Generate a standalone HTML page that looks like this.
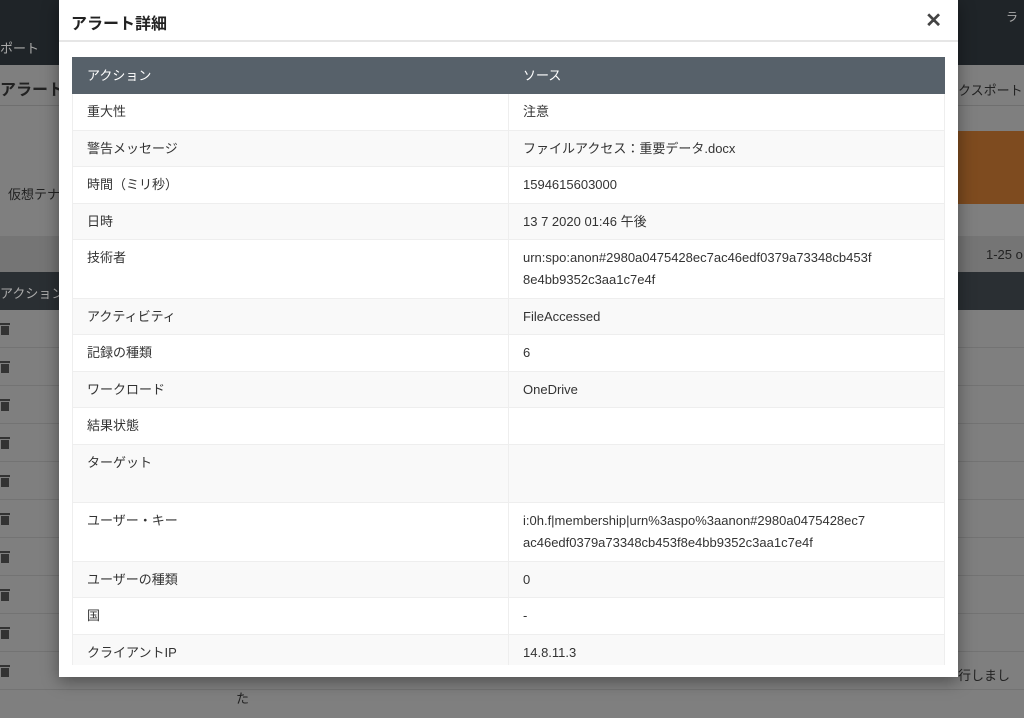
<!DOCTYPE html>
<html><head><meta charset="utf-8"><style>
*{box-sizing:border-box;margin:0;padding:0}
body{width:1024px;height:718px;overflow:hidden;position:relative;background:#7f7f7f;font-family:"Liberation Sans","Noto Sans CJK JP",sans-serif;font-size:13px;color:#333}
.nav{position:absolute;left:0;top:0;width:1024px;height:65px;background:#1f2428}
.t{position:absolute;color:#222;white-space:nowrap}
.modal{position:absolute;left:59px;top:0;width:899px;height:677px;background:#fff;box-shadow:0 4px 16px rgba(0,0,0,.4)}
.mh{height:42px;border-bottom:2px solid #e6e6e6;padding:10px 12px;font-size:16px;font-weight:bold;color:#222;position:relative}
.x{position:absolute;right:16px;top:8px;font-size:20px;font-weight:bold;color:#444}
.wrap{position:absolute;left:13px;top:57px;width:873px;height:608px;overflow:hidden}
table{width:873px;border-collapse:collapse;table-layout:fixed}
td,th{padding:7px 14px 6.5px;line-height:22px;vertical-align:top;text-align:left;font-weight:normal;border:1px solid #eee}
th{background:#57616a;color:#fff;border-color:#57616a;padding:7px 14px 6px}
tr:nth-child(odd) td{background:#f9f9f9}
.tr{position:absolute;left:0;width:10px;height:12px}
.tr:before{content:"";position:absolute;left:0;top:0;width:10px;height:2px;background:#333}
.tr:after{content:"";position:absolute;left:1px;top:3px;width:8px;height:9px;background:#333}
</style></head><body>
<div class="nav"></div>
<div class="t" style="left:0;top:38px;color:#aaa;font-size:13px">ポート</div>
<div class="t" style="left:1006px;top:8px;color:#aaa;font-size:12px">ラ</div>
<div class="t" style="left:0;top:76px;font-size:16px;font-weight:bold">アラート</div>
<div class="t" style="left:958px;top:80px;font-size:13px">クスポート</div>
<div style="position:absolute;left:0;top:105px;width:1024px;height:1px;background:#6f6f6f"></div>
<div style="position:absolute;left:958px;top:131px;width:66px;height:73px;background:#7e4b1f"></div>
<div class="t" style="left:8px;top:184px">仮想テナ</div>
<div style="position:absolute;left:0;top:236px;width:1024px;height:36px;background:#757575"></div>
<div class="t" style="left:986px;top:247px">1-25 o</div>
<div style="position:absolute;left:0;top:272px;width:1024px;height:38px;background:#2a2f33"></div>
<div class="t" style="left:0;top:283px;color:#aaa">アクション</div>
<div id="rows"></div>
<div class="t" style="left:236px;top:688px">た</div>
<div class="t" style="left:958px;top:665px">行しまし</div>
<script>
var h='';for(var i=0;i<10;i++){var y=310+i*38;h+='<div style="position:absolute;left:0;top:'+(y+37)+'px;width:1024px;height:1px;background:#737373"></div><div class="tr" style="top:'+(y+13)+'px"></div>';}
document.getElementById('rows').innerHTML=h;
</script>
<div class="modal">
<div class="mh">アラート詳細<span class="x">✕</span></div>
<div class="wrap"><table>
<tr><th style="width:436px">アクション</th><th>ソース</th></tr>
<tr><td>重大性</td><td>注意</td></tr>
<tr><td>警告メッセージ</td><td>ファイルアクセス：重要データ.docx</td></tr>
<tr><td>時間（ミリ秒）</td><td>1594615603000</td></tr>
<tr><td>日時</td><td>13 7 2020 01:46 午後</td></tr>
<tr><td>技術者</td><td>urn:spo:anon#2980a0475428ec7ac46edf0379a73348cb453f<br>8e4bb9352c3aa1c7e4f</td></tr>
<tr><td>アクティビティ</td><td>FileAccessed</td></tr>
<tr><td>記録の種類</td><td>6</td></tr>
<tr><td>ワークロード</td><td>OneDrive</td></tr>
<tr><td>結果状態</td><td>&nbsp;</td></tr>
<tr><td>ターゲット<br>&nbsp;</td><td>&nbsp;</td></tr>
<tr><td>ユーザー・キー</td><td>i:0h.f|membership|urn%3aspo%3aanon#2980a0475428ec7<br>ac46edf0379a73348cb453f8e4bb9352c3aa1c7e4f</td></tr>
<tr><td>ユーザーの種類</td><td>0</td></tr>
<tr><td>国</td><td>-</td></tr>
<tr><td>クライアントIP</td><td>14.8.11.3</td></tr>
</table></div>
</div>
</body></html>
